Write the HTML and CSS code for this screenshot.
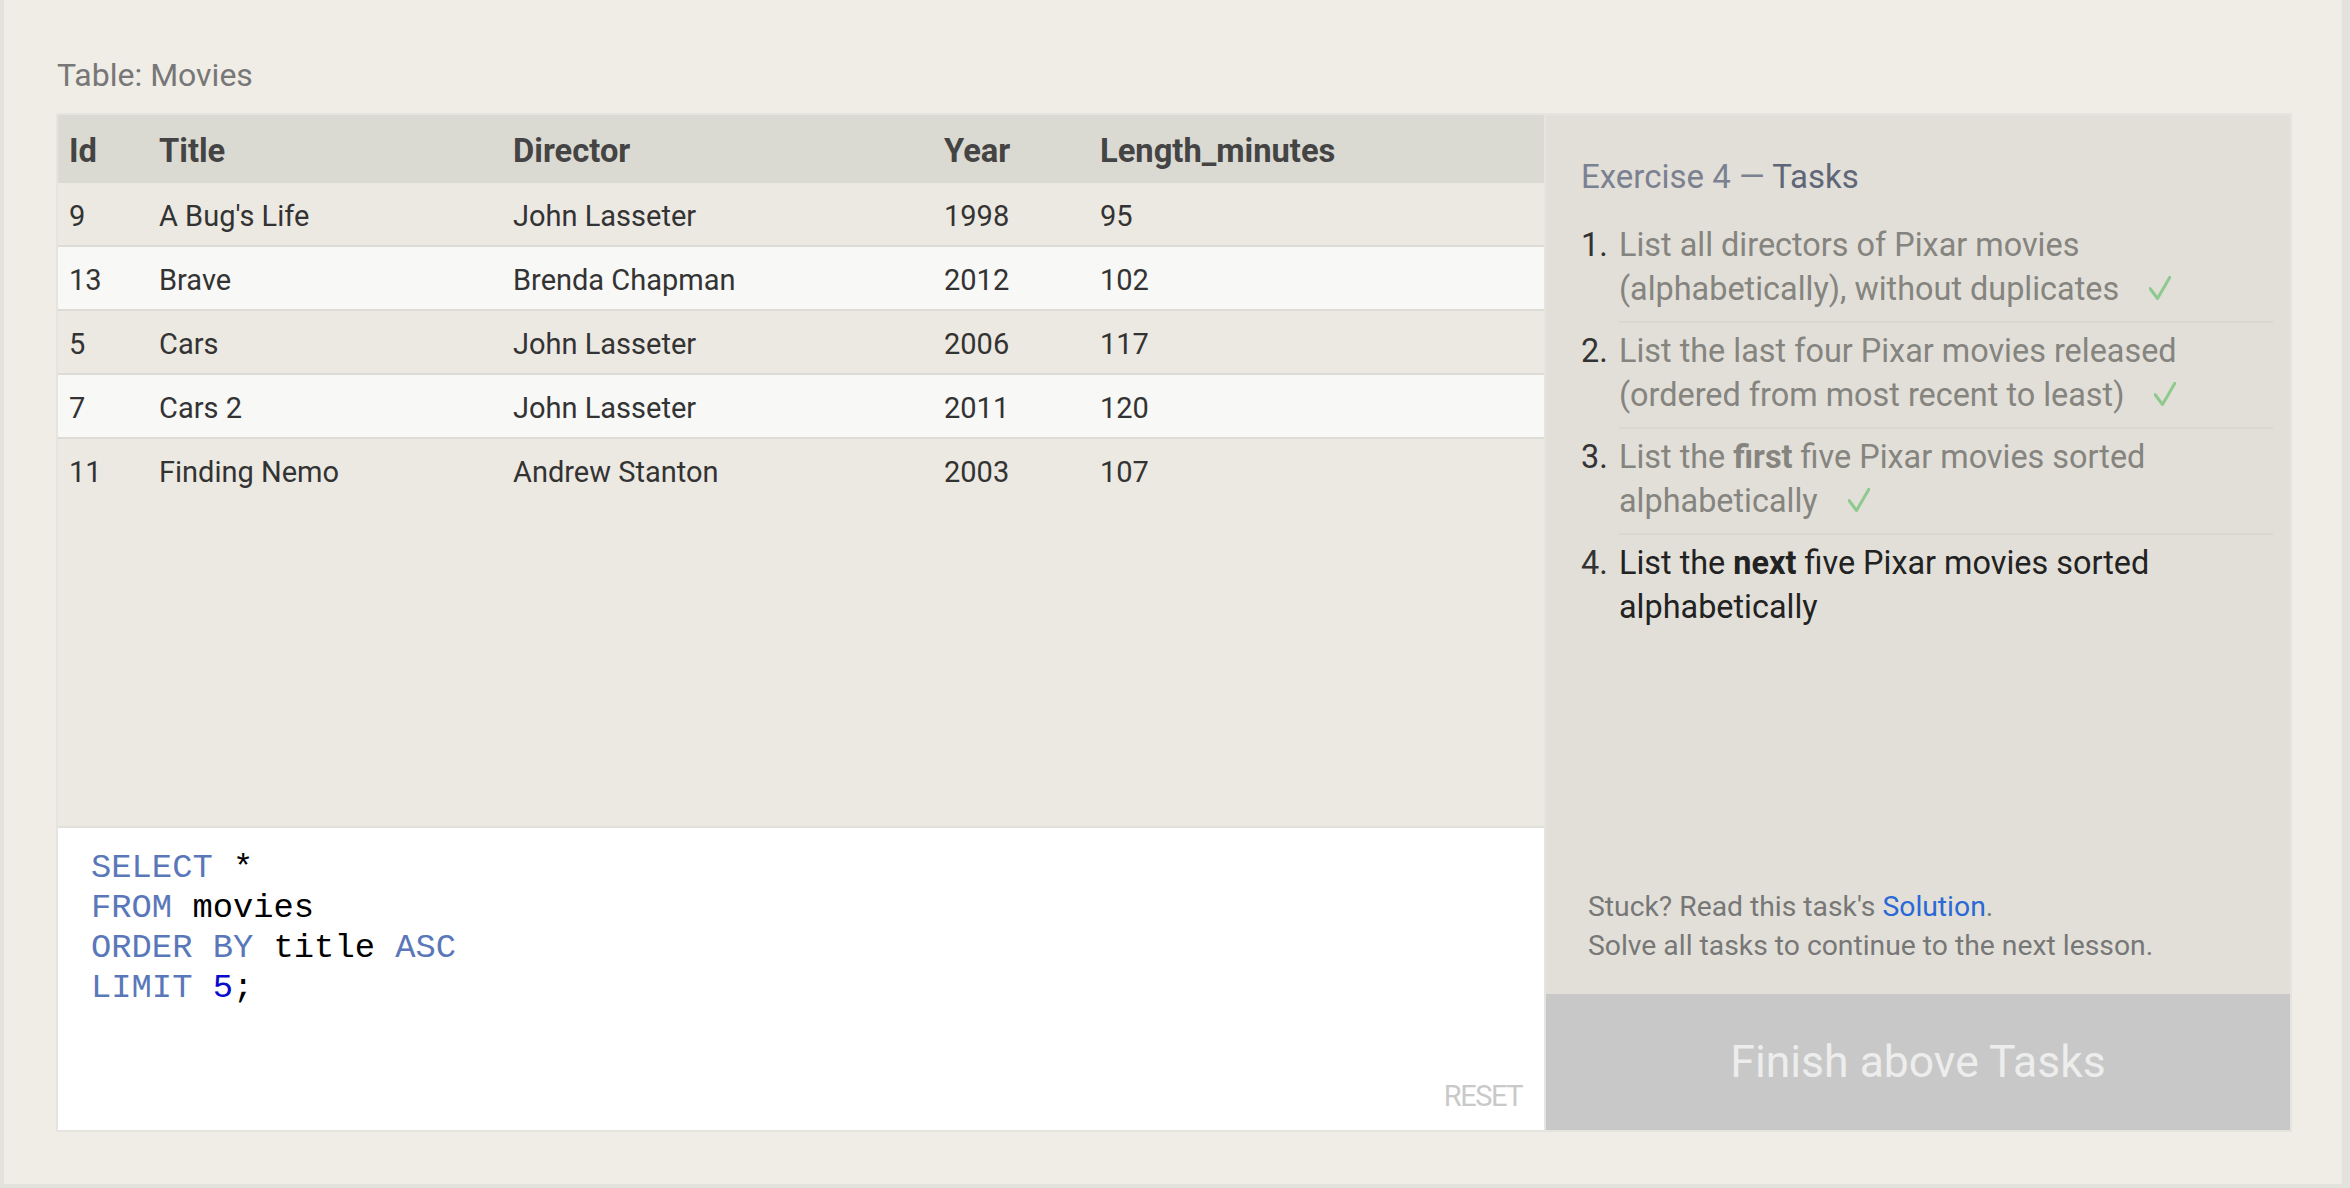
FILE: index.html
```html
<!DOCTYPE html>
<html lang="en">
<head>
<meta charset="utf-8">
<title>SQL Exercise 4 — Tasks</title>
<link rel="stylesheet" href="styles.css">
</head>
<body>
<div class="page">
  <div class="table-label">Table: Movies</div>
  <div class="widget">
    <div class="left-col">
      <div class="table-area">
        <table class="results">
          <colgroup>
            <col class="c-id"><col class="c-title"><col class="c-director"><col class="c-year"><col>
          </colgroup>
          <thead>
            <tr><th>Id</th><th>Title</th><th>Director</th><th>Year</th><th>Length_minutes</th></tr>
          </thead>
          <tbody>
            <tr><td>9</td><td>A Bug's Life</td><td>John Lasseter</td><td>1998</td><td>95</td></tr>
            <tr><td>13</td><td>Brave</td><td>Brenda Chapman</td><td>2012</td><td>102</td></tr>
            <tr><td>5</td><td>Cars</td><td>John Lasseter</td><td>2006</td><td>117</td></tr>
            <tr><td>7</td><td>Cars 2</td><td>John Lasseter</td><td>2011</td><td>120</td></tr>
            <tr><td>11</td><td>Finding Nemo</td><td>Andrew Stanton</td><td>2003</td><td>107</td></tr>
          </tbody>
        </table>
      </div>
      <div class="editor">
<pre class="code"><span class="kw">SELECT</span> *
<span class="kw">FROM</span> movies
<span class="kw">ORDER BY</span> title <span class="kw">ASC</span>
<span class="kw">LIMIT</span> <span class="num">5</span>;</pre>
        <div class="reset">RESET</div>
      </div>
    </div>
    <div class="tasks-panel">
      <div class="tasks">
        <h2 class="tasks-title"><span class="light">Exercise 4 — </span><span class="dark">Tasks</span></h2>
        <ol class="task-list">
          <li class="task done"><span class="task-num">1.</span><div class="task-body">List all directors of Pixar movies<br>(alphabetically), without duplicates<svg class="check" viewBox="0 0 22 24" width="22" height="24"><path d="M1 12.5 L8.5 22.5 L21 1"/></svg></div></li>
          <li class="task done"><span class="task-num">2.</span><div class="task-body">List the last four Pixar movies released<br>(ordered from most recent to least)<svg class="check" viewBox="0 0 22 24" width="22" height="24"><path d="M1 12.5 L8.5 22.5 L21 1"/></svg></div></li>
          <li class="task done"><span class="task-num">3.</span><div class="task-body">List the <b>first</b> five Pixar movies sorted<br>alphabetically<svg class="check" viewBox="0 0 22 24" width="22" height="24"><path d="M1 12.5 L8.5 22.5 L21 1"/></svg></div></li>
          <li class="task current"><span class="task-num">4.</span><div class="task-body">List the <b>next</b> five Pixar movies sorted<br>alphabetically</div></li>
        </ol>
      </div>
      <div class="stuck">
        <div>Stuck? Read this task's <a class="solution" href="#">Solution</a>.</div>
        <div>Solve all tasks to continue to the next lesson.</div>
      </div>
      <div class="finish">Finish above Tasks</div>
    </div>
  </div>
</div>
</body>
</html>
```
FILE: styles.css
```css
html, body {
  margin: 0;
  padding: 0;
}
body {
  background: #e4e2dd;
  font-family: Roboto, "Liberation Sans", Arial, sans-serif;
  width: 2350px;
  height: 1188px;
  overflow: hidden;
}
.page {
  margin: 0 8px 4px 4px;
  height: 1184px;
  box-sizing: border-box;
  padding: 55px 50px 0 52px;
  background: #efede6;
}
.table-label {
  font-size: 32px;
  line-height: 40px;
  color: #777777;
  padding-left: 1px;
  margin-bottom: 18px;
}
.widget {
  display: flex;
  border: 2px solid #e6e4de;
  height: 1015px;
}
.left-col {
  width: 1486px;
  display: flex;
  flex-direction: column;
}
.table-area {
  flex: 1;
  background: #ebe9e2;
}
.results {
  width: 100%;
  border-collapse: collapse;
  table-layout: fixed;
}
.c-id { width: 90px; }
.c-title { width: 354px; }
.c-director { width: 431px; }
.c-year { width: 156px; }
.results th {
  background: #dbdad2;
  color: #444444;
  font-size: 32.7px;
  font-weight: 700;
  line-height: 36px;
  text-align: left;
  padding: 18px 11px 14px;
}
.results td {
  color: #333333;
  font-size: 29px;
  line-height: 34px;
  padding: 16px 11px 12px;
  border-bottom: 2px solid #dddbd5;
  white-space: nowrap;
}
.results tbody tr:nth-child(even) td {
  background: #f8f8f7;
}
.results tbody tr:last-child td {
  border-bottom: none;
}
.editor {
  height: 304px;
  box-sizing: border-box;
  background: #ffffff;
  border-top: 2px solid #e2e0da;
  display: flex;
  flex-direction: column;
}
.code {
  flex: 1;
  margin: 0;
  padding: 20px 0 0 33px;
  font-family: "Liberation Mono", "Courier New", monospace;
  font-size: 33.8px;
  line-height: 40px;
  color: #000000;
}
.kw { color: #5a78b9; }
.num { color: #0a0acc; }
.reset {
  align-self: flex-end;
  font-size: 29px;
  letter-spacing: -1.5px;
  line-height: 34px;
  color: #c9c9c9;
  margin: 0 22px 17px 0;
}
.tasks-panel {
  flex: 1;
  border-left: 2px solid #e6e4de;
  background: #e1dfd8;
  display: flex;
  flex-direction: column;
}
.tasks {
  padding: 42px 17px 0 35px;
}
.tasks-title {
  margin: 0 0 20px;
  font-size: 33px;
  line-height: 40px;
  font-weight: 400;
}
.tasks-title .light { color: #7b8190; }
.tasks-title .dark { color: #5f6677; }
.task-list {
  list-style: none;
  margin: 0;
  padding: 0;
}
.task {
  display: flex;
  font-size: 32.4px;
  line-height: 44px;
}
.task-num {
  width: 38px;
  flex: none;
  padding-top: 6px;
  color: #333333;
}
.task-body {
  flex: 1;
  padding: 6px 0 10px;
  border-bottom: 2px solid #d9d7cf;
}
.task:last-child .task-body {
  border-bottom: none;
}
.task.done .task-body { color: #85847f; }
.task.current .task-body { color: #222222; }
.task b { font-weight: 700; }
.check {
  margin-left: 30px;
  vertical-align: baseline;
}
.check path {
  fill: none;
  stroke: #8ec98e;
  stroke-width: 3;
  stroke-linecap: round;
  stroke-linejoin: round;
}
.stuck {
  margin-top: auto;
  padding: 0 0 29px 42px;
  font-size: 28.3px;
  line-height: 39px;
  color: #777777;
}
.solution {
  color: #2a68d6;
  text-decoration: none;
}
.finish {
  height: 136px;
  background: #c8c8c8;
  color: #ededed;
  font-size: 44.5px;
  display: flex;
  align-items: center;
  justify-content: center;
}
```
